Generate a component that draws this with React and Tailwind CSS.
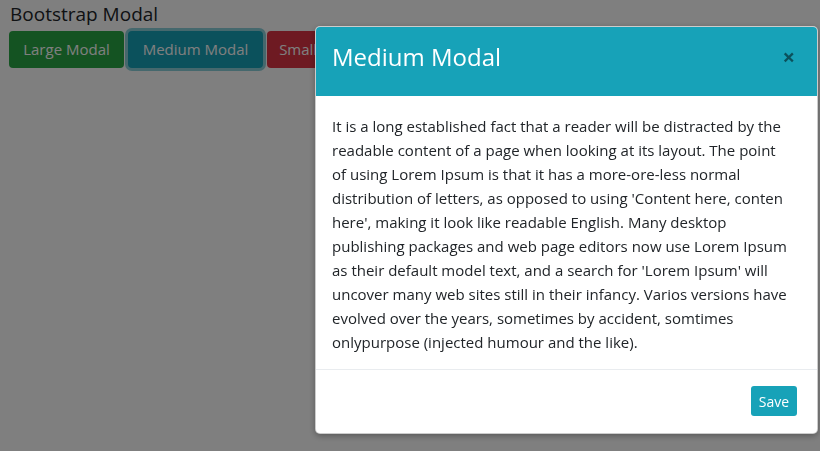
import { useState } from "react";

const lines = [
    "It is a long established fact that a reader will be distracted by the",
    "readable content of a page when looking at its layout. The point",
    "of using Lorem Ipsum is that it has a more-ore-less normal",
    "distribution of letters, as opposed to using 'Content here, conten",
    "here', making it look like readable English. Many desktop",
    "publishing packages and web page editors now use Lorem Ipsum",
    "as their default model text, and a search for 'Lorem Ipsum' will",
    "uncover many web sites still in their infancy. Varios versions have",
    "evolved over the years, sometimes by accident, somtimes",
    "onlypurpose (injected humour and the like).",
];

const font = { fontFamily: '"Open Sans", "Noto Sans", sans-serif' };

const App = () => {
    const [open, setOpen] = useState(true);

    return (
        <div className="min-h-[451px] bg-white text-[#212529]" style={font}>
            <h1 className="pl-[10px] pt-[1px] text-[19px] leading-[26px] font-normal">Bootstrap Modal</h1>
            <div className="flex gap-[4px] pl-[9px] pt-[4px]">
                <button className="h-[37px] w-[115px] rounded-[4px] bg-[#28a745] text-[15px] text-white">Large Modal</button>
                <button
                    onClick={() => setOpen(true)}
                    className="h-[37px] w-[135px] rounded-[4px] bg-[#17a2b8] text-[15px] text-white shadow-[0_0_0_3px_rgba(23,162,184,0.5)]"
                >
                    Medium Modal
                </button>
                <button className="h-[37px] w-[110px] rounded-[4px] bg-[#dc3545] text-[15px] text-white">Small Modal</button>
            </div>

            {open && (
                <div className="fixed inset-0 bg-black/50 pl-[315px] pt-[26px]">
                    <div className="w-[503px] overflow-hidden rounded-[5px] border border-black/20 bg-white shadow-[0_2px_6px_rgba(0,0,0,0.3)]">
                        <div className="flex h-[69px] items-start justify-between bg-[#17a2b8] pl-[16px] pr-[22px] pt-[12px]">
                            <h5 className="text-[24px] leading-[36px] text-white">Medium Modal</h5>
                            <button
                                onClick={() => setOpen(false)}
                                className="mt-[2px] text-[22px] font-bold leading-[30px] text-black/50"
                            >
                                ×
                            </button>
                        </div>
                        <div className="border-b border-[#e9ecef] px-[16px] pb-[15px] pt-[18px] text-[15px] leading-[24px]">
                            {lines.map((line) => (
                                <div key={line} className="whitespace-nowrap">{line}</div>
                            ))}
                        </div>
                        <div className="flex justify-end px-[20px] pb-[17px] pt-[16px]">
                            <button className="h-[30px] w-[46px] rounded-[3px] bg-[#17a2b8] text-[14px] text-white">Save</button>
                        </div>
                    </div>
                </div>
            )}
        </div>
    );
};

export default App;
